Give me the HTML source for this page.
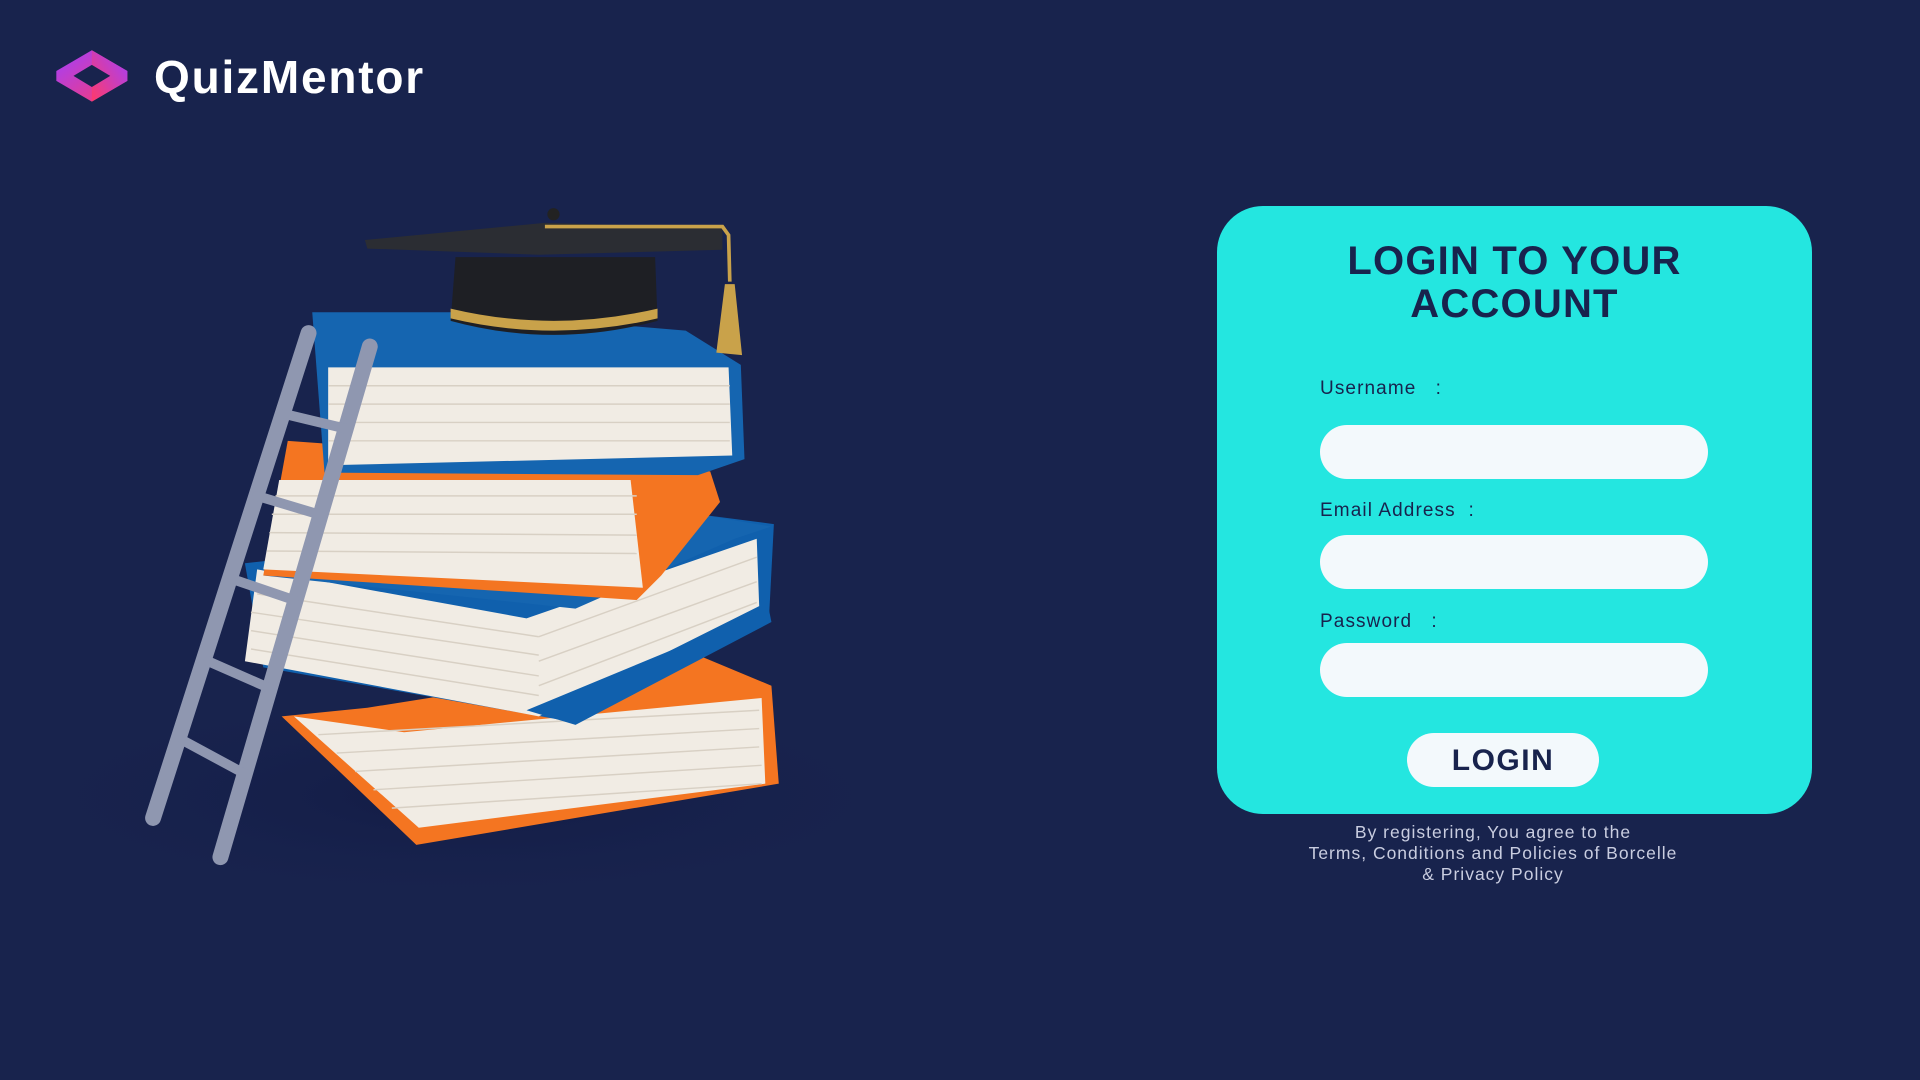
<!DOCTYPE html>
<html><head><meta charset="utf-8"><style>
html,body{margin:0;padding:0}
body{width:1920px;height:1080px;background:#18234d;position:relative;overflow:hidden;font-family:"Liberation Sans",sans-serif}
.abs{position:absolute}
.logo{left:154px;top:50px;font-size:46px;font-weight:bold;color:#fff;letter-spacing:1.8px}
.card{left:1217px;top:206px;width:595px;height:608px;background:#24e6e0;border-radius:46px}
.title{left:1217px;width:595px;top:240px;text-align:center;font-size:40px;font-weight:bold;color:#18234d;line-height:43px;letter-spacing:1.2px}
.lbl{left:1320px;font-size:19px;color:#18234d;letter-spacing:1.1px}
.inp{left:1320px;width:388px;height:54px;background:#f3f9fc;border-radius:27px}
.btn{left:1407px;top:733px;width:192px;height:54px;background:#f3f9fc;border-radius:27px;text-align:center;line-height:56px;font-size:30px;font-weight:bold;color:#18234d;letter-spacing:1.5px}
.foot{left:1200px;width:586px;top:822px;text-align:center;font-size:17.5px;line-height:21px;color:#c9cde0;letter-spacing:1px}
</style></head><body>
<svg class="abs" style="left:0;top:0" width="1920" height="1080" viewBox="0 0 1568 882">
<defs>
<linearGradient id="lg1" x1="0" y1="0" x2="1" y2="1"><stop offset="0" stop-color="#a040ff"/><stop offset="1" stop-color="#ff3a6a"/></linearGradient>
<linearGradient id="lg2" x1="1" y1="0" x2="0" y2="1"><stop offset="0" stop-color="#a040ff"/><stop offset="1" stop-color="#ff3a6a"/></linearGradient>
<radialGradient id="sh" cx="0.5" cy="0.5" r="0.5"><stop offset="0" stop-color="#0f1740" stop-opacity="0.6"/><stop offset="1" stop-color="#141d4a" stop-opacity="0"/></radialGradient>
</defs>
<ellipse cx="380" cy="650" rx="340" ry="80" fill="url(#sh)"/>
<!-- logo -->
<polygon points="46,58 75,41 104,58 104,66 75,83 46,66" fill="url(#lg1)"/>
<polygon points="75,41 104,58 104,66 75,83" fill="url(#lg2)"/>
<polygon points="60,62 75,53 90,62 75,71" fill="#18234d"/>
<!-- bottom orange book -->
<polygon points="300,578 570,535 630,560 636,640 340,690 230,585" fill="#f47521"/>
<polygon points="240,585 330,598 622,570 625,640 342,676" fill="#f1ece4"/>
<g stroke="#d8d0c4" stroke-width="1.2">
<line x1="260" y1="600" x2="620" y2="580"/><line x1="275" y1="615" x2="620" y2="595"/><line x1="290" y1="630" x2="620" y2="610"/><line x1="305" y1="645" x2="622" y2="625"/><line x1="320" y1="660" x2="622" y2="640"/></g>
<!-- blue book 3 -->
<polygon points="200,460 570,420 632,428 628,505 470,590 215,545" fill="#1060ad"/>
<polygon points="210,465 430,505 618,440 620,495 440,585 200,540" fill="#f1ece4"/>
<polygon points="215,470 470,497 600,440 630,430 570,420" fill="#1565b0"/>
<g stroke="#d8d0c4" stroke-width="1.2">
<line x1="210" y1="485" x2="440" y2="520"/><line x1="205" y1="500" x2="440" y2="535"/><line x1="205" y1="515" x2="440" y2="552"/><line x1="205" y1="530" x2="440" y2="568"/>
<line x1="440" y1="520" x2="618" y2="455"/><line x1="440" y1="540" x2="618" y2="475"/><line x1="440" y1="560" x2="618" y2="492"/></g>
<polygon points="430,580 628,498 630,508 470,592" fill="#1060ad"/>
<!-- orange book 2 -->
<polygon points="235,360 580,385 588,410 540,470 520,490 215,470" fill="#f47521"/>
<polygon points="228,392 515,392 525,480 215,465" fill="#f1ece4"/>
<g stroke="#d8d0c4" stroke-width="1.2">
<line x1="225" y1="405" x2="520" y2="405"/><line x1="222" y1="420" x2="520" y2="420"/><line x1="220" y1="435" x2="520" y2="437"/><line x1="218" y1="450" x2="520" y2="452"/></g>
<!-- top blue book -->
<polygon points="255,255 380,255 560,270 605,298 608,375 570,388 265,386" fill="#1565b0"/>
<polygon points="268,300 595,300 598,372 268,380" fill="#f1ece4"/>
<g stroke="#d8d0c4" stroke-width="1.2">
<line x1="268" y1="315" x2="596" y2="315"/><line x1="268" y1="330" x2="596" y2="330"/><line x1="268" y1="345" x2="596" y2="345"/><line x1="268" y1="360" x2="596" y2="360"/></g>
<!-- cap -->
<path d="M372,210 L535,210 L537,262 Q452,285 368,262 Z" fill="#1e1f24"/>
<path d="M368,252 Q452,272 537,252 L537,260 Q452,280 368,260 Z" fill="#c9a24a"/>
<polygon points="298,196 445,182 590,186 590,204 440,208 300,203" fill="#2b2d33"/>
<circle cx="452" cy="175" r="5" fill="#222"/>
<path d="M445,185 L590,185 L595,192 L596,230" stroke="#c9a24a" stroke-width="3" fill="none"/>
<path d="M592,232 L600,232 L606,290 L585,288 Z" fill="#c9a24a"/>
<!-- ladder -->
<g stroke="#8f97b0" stroke-linecap="round">
<line x1="252" y1="272" x2="125" y2="668" stroke-width="13"/>
<line x1="302" y1="283" x2="180" y2="700" stroke-width="13"/>
<line x1="232" y1="338" x2="282" y2="350" stroke-width="8"/>
<line x1="210" y1="405" x2="260" y2="420" stroke-width="8"/>
<line x1="190" y1="473" x2="240" y2="490" stroke-width="8"/>
<line x1="170" y1="540" x2="220" y2="562" stroke-width="8"/>
<line x1="150" y1="605" x2="200" y2="632" stroke-width="8"/>
</g>
</svg>
<div class="abs logo">QuizMentor</div>
<div class="abs card"></div>
<div class="abs title">LOGIN TO YOUR<br>ACCOUNT</div>
<div class="abs lbl" style="top:378px">Username &nbsp;&nbsp;:</div>
<div class="abs inp" style="top:425px"></div>
<div class="abs lbl" style="top:500px">Email Address &nbsp;:</div>
<div class="abs inp" style="top:535px"></div>
<div class="abs lbl" style="top:611px">Password &nbsp;&nbsp;:</div>
<div class="abs inp" style="top:643px"></div>
<div class="abs btn">LOGIN</div>
<div class="abs foot">By registering, You agree to the<br>Terms, Conditions and Policies of Borcelle<br>&amp; Privacy Policy</div>
</body></html>
